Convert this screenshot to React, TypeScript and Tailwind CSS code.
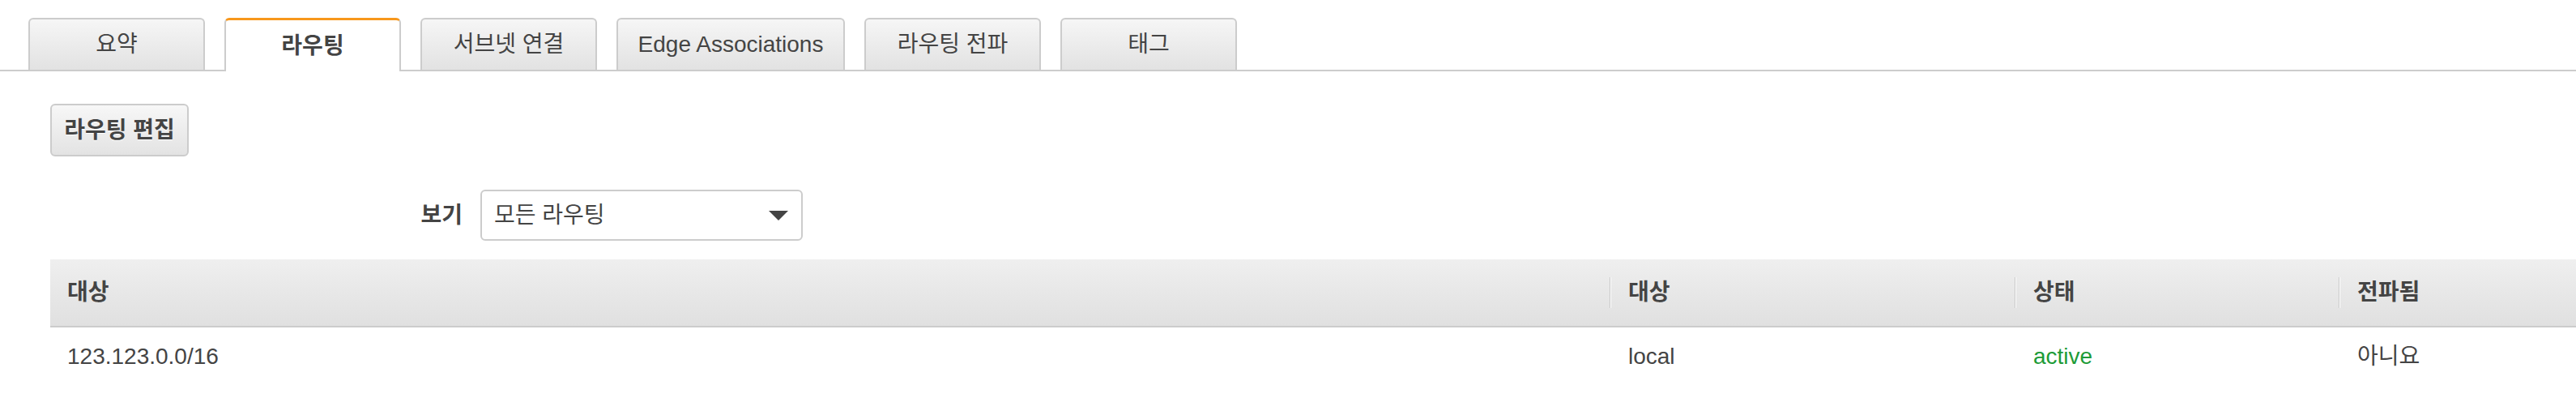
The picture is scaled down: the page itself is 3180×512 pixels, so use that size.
import React from "react";

const font = "font-['Liberation_Sans','Noto_Sans_CJK_KR',sans-serif]";

function Tab({ label, active, wide }: { label: string; active?: boolean; wide?: boolean }) {
  if (active) {
    return (
      <div
        className={`relative -mb-[2px] h-[66px] w-[218px] rounded-t-[6px] border-x-2 border-t-[3px] border-x-[#cccccc] border-t-[#f7971c] bg-white flex items-center justify-center text-[28px] font-bold text-[#444]`}
      >
        {label}
      </div>
    );
  }
  return (
    <div
      className={`h-[64px] ${wide ? "w-[282px]" : "w-[218px]"} rounded-t-[6px] border-x-2 border-t-2 border-[#cccccc] bg-gradient-to-b from-[#f6f6f6] to-[#e2e2e2] flex items-center justify-center text-[28px] text-[#444]`}
    >
      {label}
    </div>
  );
}

function HeaderCell({ label, width, divider }: { label: string; width?: string; divider?: boolean }) {
  return (
    <div className={`${width ?? "flex-1"} h-full flex items-center`}>
      {divider && <div className="h-[38px] w-[2px] border-l border-[#c8c8c8] bg-white mr-[21px]" />}
      {!divider && <div className="w-[21px]" />}
      <span className="text-[28px] font-bold text-[#444]">{label}</span>
    </div>
  );
}

export default function App() {
  return (
    <div className={`w-[3180px] h-[512px] overflow-hidden bg-white ${font} text-[#444]`}>
      {/* Tabs */}
      <div className="pt-[22px] h-[88px] border-b-2 border-[#cccccc] pl-[35px] flex items-end gap-[24px]">
        <Tab label="요약" />
        <Tab label="라우팅" active />
        <Tab label="서브넷 연결" />
        <Tab label="Edge Associations" wide />
        <Tab label="라우팅 전파" />
        <Tab label="태그" />
      </div>

      {/* Edit button */}
      <div className="mt-[40px] pl-[62px]">
        <button className="h-[65px] w-[171px] rounded-[6px] border-2 border-[#cccccc] bg-gradient-to-b from-[#f7f7f7] to-[#e3e3e3] text-[28px] font-bold text-[#444] [text-shadow:0_1px_0_#fff]">
          라우팅 편집
        </button>
      </div>

      {/* Filter */}
      <div className="mt-[41px] flex items-center">
        <div className="w-[571px] text-right text-[28px] font-bold text-[#444]">보기</div>
        <div className="ml-[22px] h-[63px] w-[398px] rounded-[6px] border-2 border-[#cccccc] bg-white flex items-center justify-between pl-[15px] pr-[16px]">
          <span className="text-[28px] text-[#444]">모든 라우팅</span>
          <svg width="24" height="12" viewBox="0 0 24 12">
            <polygon points="0,0 24,0 12,12" fill="#444" />
          </svg>
        </div>
      </div>

      {/* Table */}
      <div className="mt-[23px] ml-[62px]">
        <div className="h-[84px] border-b-2 border-[#cccccc] bg-gradient-to-b from-[#efefef] to-[#e0e0e0] flex">
          <HeaderCell label="대상" width="w-[1925px]" />
          <HeaderCell label="대상" width="w-[500px]" divider />
          <HeaderCell label="상태" width="w-[400px]" divider />
          <HeaderCell label="전파됨" divider />
        </div>
        <div className="h-[72px] flex items-center text-[28px] text-[#444]">
          <div className="w-[1925px] pl-[21px]">123.123.0.0/16</div>
          <div className="w-[500px] pl-[23px]">local</div>
          <div className="w-[400px] pl-[23px] text-[#1d9b37]">active</div>
          <div className="flex-1 pl-[23px]">아니요</div>
        </div>
      </div>
    </div>
  );
}
